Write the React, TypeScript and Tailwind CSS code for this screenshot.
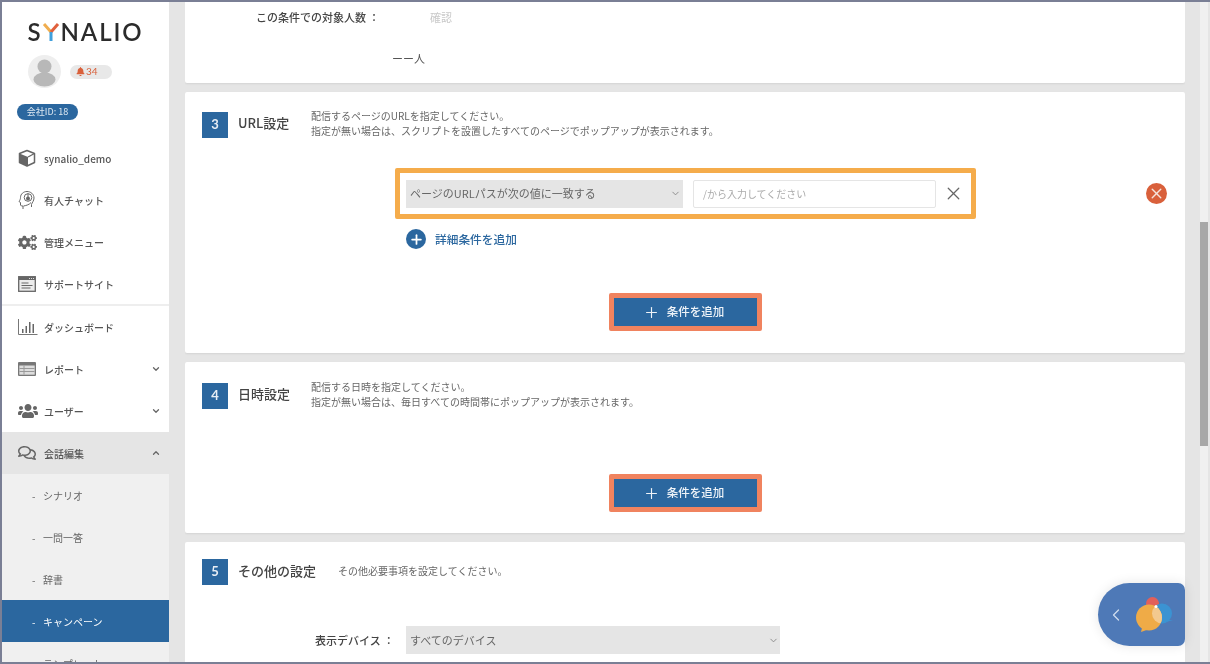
import { ChevronDown, ChevronUp, Plus, X, ChevronLeft } from "lucide-react";
import { FaBell, FaCogs, FaUsers, FaRegComments } from "react-icons/fa";

const jp = "[font-family:'Noto_Sans_CJK_JP','Noto_Sans',sans-serif]";

function CubeIcon() {
  return (
    <svg width="18" height="18" viewBox="0 0 18 18">
      <path d="M9 1.500 16.500 4.500v9L9 17l-7.500-3.500v-9z" fill="#fff" stroke="#666" strokeWidth="1.500" strokeLinejoin="round" />
      <path d="M1.500 4.500 10 8v9l-8.500-3.500z" fill="#666" />
      <path d="M10 8l6.500-3.500" stroke="#666" strokeWidth="1.300" />
    </svg>
  );
}

function HeadIcon() {
  return (
    <svg width="18" height="20" viewBox="0 0 18 20" fill="none" stroke="#666" strokeWidth="1">
      <path d="M5 19v-3H3.500l-1-1v-2.500L1 11.500C2 10 2.500 9 2.500 7.500 2.500 4 5.500 1.500 9 1.500s7 2.500 7 6.500c0 3-2 4.500-2.500 6.500V17" />
      <path d="M5.500 16c3-.5 6-1.500 7.500-3.500" />
      <circle cx="10" cy="7.500" r="3.800" />
      <path d="M10 3.500v4" />
      <circle cx="10" cy="8.500" r="2" fill="#666" stroke="none" />
    </svg>
  );
}

function WindowIcon() {
  return (
    <svg width="18" height="16" viewBox="0 0 18 16" fill="none">
      <rect x="0.700" y="0.700" width="16.600" height="14.600" fill="#ececec" stroke="#666" strokeWidth="1.300" />
      <rect x="1" y="1" width="16" height="3" fill="#666" />
      <path d="M11 2.500h1M13 2.500h1M15 2.500h1" stroke="#ddd" strokeWidth="1" />
      <path d="M3.500 7h7M3.500 9.500h11M3.500 12h9" stroke="#666" strokeWidth="1" />
    </svg>
  );
}

function ChartIcon() {
  return (
    <svg width="20" height="16" viewBox="0 0 20 16" fill="none">
      <path d="M.5 0v15.500H19.500" stroke="#777" strokeWidth="1" />
      <path d="M4 10h1.500v4H4zM7.500 7H9v7H7.500zM11 3h1.500v11H11zM14.500 5H16v9h-1.500z" fill="#666" />
    </svg>
  );
}

function ListIcon() {
  return (
    <svg width="18" height="14" viewBox="0 0 18 14">
      <rect width="18" height="14" rx="1" fill="#777" />
      <rect x="1.300" y="3.500" width="15.400" height="9.200" fill="#ddd" />
      <path d="M1.500 6.500h15M1.500 9.500h15M6 3.500v9" stroke="#999" strokeWidth="1" />
    </svg>
  );
}

function Avatar() {
  return (
    <svg width="33" height="33" viewBox="0 0 33 33">
      <circle cx="16.500" cy="16.500" r="16.500" fill="#eeeeee" />
      <circle cx="16.500" cy="11.500" r="7" fill="#b8b8b8" />
      <ellipse cx="16.500" cy="24.500" rx="11" ry="7" fill="#b8b8b8" />
    </svg>
  );
}

function Logo() {
  return (
    <div className="flex items-center justify-center font-['Lato',sans-serif] text-[24px] font-semibold leading-none tracking-[1.900px] text-[#2b2b2b]">
      <span>S</span>
      <svg width="18" height="19" viewBox="0 0 18 19">
        <path d="M2 1 9 9" stroke="#f0ad4e" strokeWidth="3" />
        <path d="M16 1 9 9" stroke="#e0603c" strokeWidth="3" />
        <path d="M9 9v9" stroke="#3f9fdc" strokeWidth="3" />
      </svg>
      <span>NALIO</span>
    </div>
  );
}

function NavRow({ icon, label, chevron, className = "" }: { icon: React.ReactNode; label: string; chevron?: "up" | "down"; className?: string }) {
  return (
    <div className={`flex h-[42px] items-center pl-[16px] pr-[8px] ${className}`}>
      <div className="flex w-[26px] shrink-0 items-center">{icon}</div>
      <span className={`${jp} text-[10px] font-medium text-[#555]`}>{label}</span>
      {chevron === "down" && <ChevronDown className="ml-auto text-[#666]" size={10} strokeWidth={3} />}
      {chevron === "up" && <ChevronUp className="ml-auto text-[#666]" size={10} strokeWidth={3} />}
    </div>
  );
}

function SubRow({ label, active }: { label: string; active?: boolean }) {
  return (
    <div className={`flex h-[42px] items-center pl-[30px] ${jp} text-[10px] ${active ? "bg-[#2b679f] text-white" : "text-[#666]"}`}>
      <span className="w-[11px]">-</span>
      <span>{label}</span>
    </div>
  );
}

function Sidebar() {
  return (
    <aside className="w-[167px] shrink-0 overflow-hidden bg-white">
      <div className="pt-[18px]">
        <Logo />
        <div className="mt-[11px] flex items-center pl-[26px]">
          <Avatar />
          <div className="ml-[9px] flex h-[14px] w-[42px] items-center gap-[1px] rounded-full bg-[#e8e8e8] pl-[6px] font-['Lato',sans-serif] text-[10px] text-[#d9603b]">
            <FaBell size={9} />
            <span>34</span>
          </div>
        </div>
        <div className={`ml-[15px] mt-[16px] flex h-[16px] w-[61px] items-center justify-center rounded-full bg-[#2b679f] ${jp} text-[9px] text-[#dfe9f2]`}>
          会社ID: 18
        </div>
      </div>
      <div className="mt-[17px] h-[169px] border-b-2 border-[#eeeeee]">
        <NavRow icon={<CubeIcon />} label="synalio_demo" />
        <NavRow icon={<HeadIcon />} label="有人チャット" />
        <NavRow icon={<FaCogs className="text-[#666]" size={19} />} label="管理メニュー" />
        <NavRow icon={<WindowIcon />} label="サポートサイト" />
      </div>
      <NavRow icon={<ChartIcon />} label="ダッシュボード" />
      <NavRow icon={<ListIcon />} label="レポート" chevron="down" />
      <NavRow icon={<FaUsers className="text-[#666]" size={20} />} label="ユーザー" chevron="down" />
      <NavRow icon={<FaRegComments className="text-[#666]" size={18} />} label="会話編集" chevron="up" className="bg-[#e5e5e5]" />
      <div className="bg-[#f0f0f0]">
        <SubRow label="シナリオ" />
        <SubRow label="一問一答" />
        <SubRow label="辞書" />
        <SubRow label="キャンペーン" active />
        <SubRow label="テンプレート" />
      </div>
    </aside>
  );
}

function SectionHead({ no, title, lines, titleWidth }: { no: number; title: string; lines: string[]; titleWidth: string }) {
  return (
    <div className="flex items-center">
      <div className="flex size-[26px] shrink-0 items-center justify-center bg-[#2b679f] font-['Lato',sans-serif] text-[13px] font-bold text-[#e8eef5]">
        {no}
      </div>
      <div className={`ml-[10px] ${titleWidth} shrink-0 pb-[3px] ${jp} text-[13px] font-medium text-[#444]`}>{title}</div>
      <div className={`pb-[2px] ${jp} text-[10px] leading-[14.500px] text-[#666]`}>
        {lines.map((l) => (
          <div key={l}>{l}</div>
        ))}
      </div>
    </div>
  );
}

function AddButton() {
  return (
    <div className="flex justify-center">
      <div className="rounded-[2px] border-[5px] border-[#f0835f]">
        <div className={`flex h-[28px] w-[143px] items-center justify-center gap-[7px] bg-[#2b679f] pr-[3px] ${jp} text-[11.500px] font-medium text-[#eef3f8]`}>
          <Plus size={17} strokeWidth={1.600} />
          <span>条件を追加</span>
        </div>
      </div>
    </div>
  );
}

export default function App() {
  return (
    <div className="relative flex h-[664px] w-[1210px] overflow-hidden border-y-[2px] border-l-[2px] border-[#7a7f95] bg-[#e5e5e5] blur-[0.4px]">
      <Sidebar />
      <main className="ml-[16px] flex w-[1000px] shrink-0 flex-col gap-[9px] overflow-hidden">
        <section className="h-[81px] shrink-0 rounded-b-[2px] bg-white shadow-[0_1px_2px_rgba(0,0,0,0.08)]">
          <div className="flex pt-[7px]">
            <span className={`ml-[71px] w-[174px] ${jp} text-[11px] font-medium text-[#444]`}>この条件での対象人数 ：</span>
            <span className={`${jp} text-[11px] text-[#c9c9c9]`}>確認</span>
          </div>
          <div className={`ml-[207px] mt-[24px] ${jp} text-[11px] text-[#555]`}>ーー人</div>
        </section>

        <section className="h-[261px] shrink-0 rounded-[2px] bg-white px-[17px] pt-[17px] shadow-[0_1px_2px_rgba(0,0,0,0.08)]">
          <SectionHead
            no={3}
            title="URL設定"
            titleWidth="w-[73px]"
            lines={["配信するページのURLを指定してください。", "指定が無い場合は、スクリプトを設置したすべてのページでポップアップが表示されます。"]}
          />
          <div className="mt-[28px] flex items-center">
            <div className="ml-[193px] flex h-[51px] w-[581px] items-center rounded-[2px] border-[5px] border-[#f5ac4b] pl-[6px]">
              <div className={`flex h-[28px] w-[277px] items-center justify-between bg-[#e5e5e5] pl-[4px] pr-[2px] ${jp} text-[11px] text-[#666]`}>
                <span>ページのURLパスが次の値に一致する</span>
                <ChevronDown size={11} className="text-[#888]" strokeWidth={2} />
              </div>
              <div className={`ml-[10px] flex h-[28px] w-[243px] items-center rounded-[2px] border border-[#e5e5e5] pl-[9px] ${jp} text-[10px] text-[#aaa]`}>
                /から入力してください
              </div>
              <X size={21} strokeWidth={1.400} className="ml-[7px] text-[#666]" />
            </div>
            <div className="ml-[170px] flex size-[21px] items-center justify-center rounded-full bg-[#d9603b]">
              <X size={17} strokeWidth={2} className="text-[#f5e3dc]" />
            </div>
          </div>
          <div className="ml-[204px] mt-[10px] flex items-center">
            <div className="flex size-[20px] items-center justify-center rounded-full bg-[#2b679f]">
              <Plus size={15} strokeWidth={2.800} className="text-white" />
            </div>
            <span className={`ml-[9px] ${jp} text-[11.700px] font-medium text-[#2b679f]`}>詳細条件を追加</span>
          </div>
          <div className="mt-[44px]">
            <AddButton />
          </div>
        </section>

        <section className="h-[171px] shrink-0 rounded-[2px] bg-white px-[17px] pt-[18px] shadow-[0_1px_2px_rgba(0,0,0,0.08)]">
          <SectionHead
            no={4}
            title="日時設定"
            titleWidth="w-[73px]"
            lines={["配信する日時を指定してください。", "指定が無い場合は、毎日すべての時間帯にポップアップが表示されます。"]}
          />
          <div className="mt-[63px]">
            <AddButton />
          </div>
        </section>

        <section className="h-[130px] shrink-0 rounded-[2px] bg-white px-[17px] pt-[17px]">
          <SectionHead no={5} title="その他の設定" titleWidth="w-[100px]" lines={["その他必要事項を設定してください。"]} />
          <div className="mt-[41px] flex items-center">
            <span className={`ml-[113px] w-[91px] ${jp} text-[11px] font-medium text-[#444]`}>表示デバイス ：</span>
            <div className={`flex h-[28px] w-[374px] items-center justify-between bg-[#e5e5e5] pl-[4px] pr-[1px] ${jp} text-[11px] text-[#666]`}>
              <span>すべてのデバイス</span>
              <ChevronDown size={11} className="text-[#888]" strokeWidth={2} />
            </div>
          </div>
        </section>
      </main>

      {/* scrollbar */}
      <div className="ml-[15px] mr-[1px] w-[8px] shrink-0 bg-[#f0f0f0] pt-[220px]">
        <div className="h-[224px] w-full bg-[#a8a8a8]" />
      </div>

      {/* chat launcher */}
      <div className="absolute left-[1096px] top-[581px] flex h-[63px] w-[87px] items-center rounded-l-[32px] rounded-r-[7px] bg-[#4e79b7] pl-[8px] shadow-[0_0_12px_rgba(0,0,0,0.1)]">
        <ChevronLeft size={20} strokeWidth={1.500} className="text-[#cfdcee]" />
        <svg width="42" height="42" viewBox="0 0 42 42" className="ml-[7px]">
          <defs>
            <clipPath id="orangeClip">
              <circle cx="16" cy="23.500" r="13" />
            </clipPath>
          </defs>
          <circle cx="19.500" cy="9.500" r="6.500" fill="#e2605a" />
          <circle cx="29" cy="19.500" r="10" fill="#3b93d2" />
          <path d="M35 26l5 0-7 2z" fill="#3b93d2" />
          <circle cx="16" cy="23.500" r="13" fill="#efab47" />
          <path d="M9 34 8 38l7-2.500z" fill="#efab47" />
          <circle cx="29" cy="19.500" r="10" fill="#f3c98e" clipPath="url(#orangeClip)" />
          <circle cx="23" cy="12.500" r="1.500" fill="#fff" />
        </svg>
      </div>
    </div>
  );
}
